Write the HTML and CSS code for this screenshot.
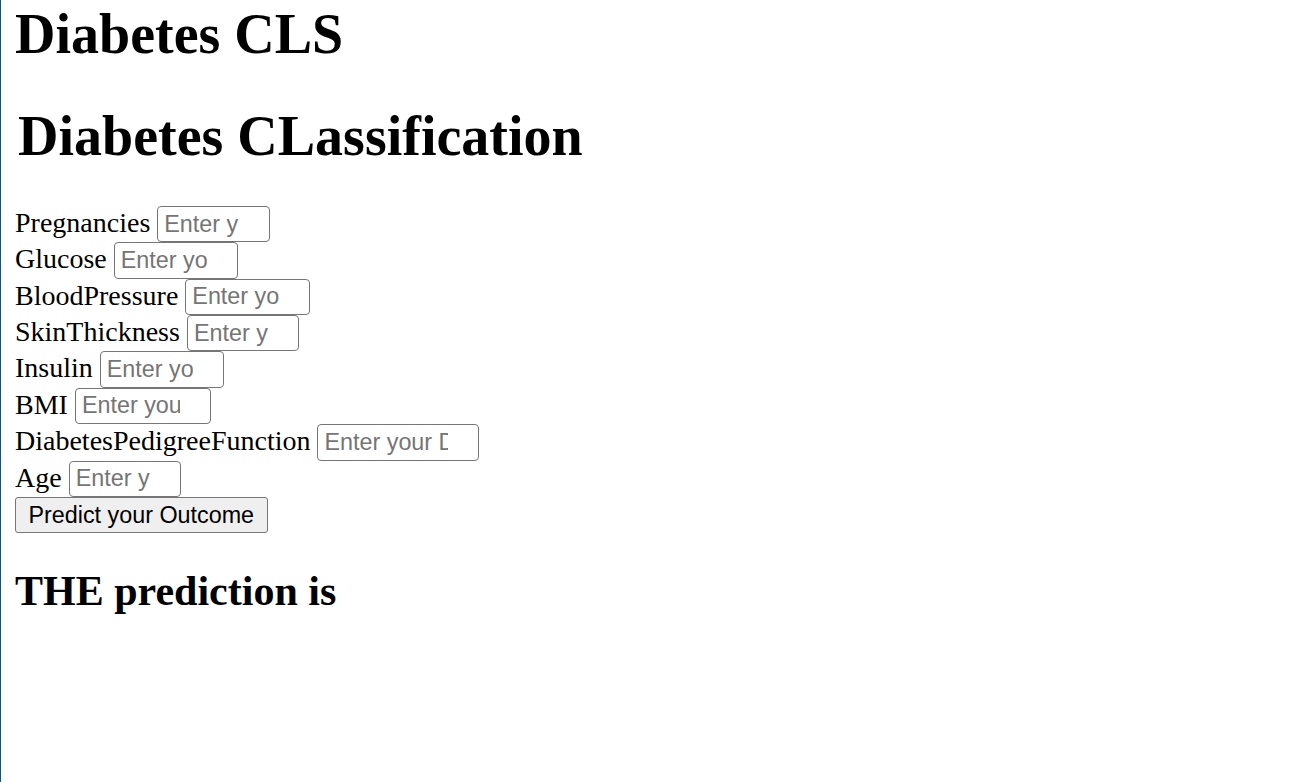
FILE: index.html
```html
<!DOCTYPE html>
<html lang="en">
<head>
<meta charset="utf-8">
<title>Diabetes CLS</title>
<link rel="stylesheet" href="styles.css">
</head>
<body>
<h1 class="page-title">Diabetes CLS</h1>
<h1 class="form-title">Diabetes CLassification</h1>
<form class="predict-form">
<label class="field-label" for="preg">Pregnancies</label> <input class="field-input w-preg" id="preg" type="text" placeholder="Enter your Pregnancies"><br>
<label class="field-label" for="glu">Glucose</label> <input class="field-input w-glu" id="glu" type="text" placeholder="Enter your Glucose"><br>
<label class="field-label" for="bp">BloodPressure</label> <input class="field-input w-bp" id="bp" type="text" placeholder="Enter your BloodPressure"><br>
<label class="field-label" for="skin">SkinThickness</label> <input class="field-input w-skin" id="skin" type="text" placeholder="Enter your SkinThickness"><br>
<label class="field-label" for="ins">Insulin</label> <input class="field-input w-ins" id="ins" type="text" placeholder="Enter your Insulin"><br>
<label class="field-label" for="bmi">BMI</label> <input class="field-input w-bmi" id="bmi" type="text" placeholder="Enter your BMI"><br>
<label class="field-label" for="dpf">DiabetesPedigreeFunction</label> <input class="field-input w-dpf" id="dpf" type="text" placeholder="Enter your DiabetesPedigreeFunction"><br>
<label class="field-label" for="age">Age</label> <input class="field-input w-age" id="age" type="text" placeholder="Enter your Age"><br>
<button class="predict-btn" type="button">Predict your Outcome</button>
</form>
<h2 class="result">THE prediction is</h2>
</body>
</html>
```

FILE: styles.css
```css
html {
  border-left: 1px solid #0b5488;
  min-height: 100%;
  box-sizing: border-box;
  background: #ffffff;
}

body {
  margin: 0 14px;
  font-family: "Liberation Serif", "Times New Roman", serif;
  font-size: 28px;
  line-height: 32.2px;
  color: #000000;
}

.page-title,
.form-title {
  font-size: 56px;
  line-height: 64.4px;
  font-weight: bold;
  margin: 37.5px 0;
}

.page-title {
  margin-top: 2px;
}

.form-title {
  padding-left: 3px;
}

.predict-form {
  margin: 0;
  line-height: 24px;
}

.field-label {
  font-family: "Liberation Serif", "Times New Roman", serif;
}

.field-input {
  box-sizing: border-box;
  height: 36.4px;
  margin: 0;
  padding: 4.2px 30px 4.2px 6px;
  border: 1px solid #767676;
  border-radius: 4px;
  background: #ffffff;
  font-family: "Liberation Sans", Arial, sans-serif;
  font-size: 23.33px;
  line-height: 26px;
  color: #000000;
  vertical-align: baseline;
}

.field-input::placeholder {
  color: #757575;
  opacity: 1;
}

.w-preg { width: 112.5px; }
.w-glu { width: 124.5px; }
.w-bp { width: 125px; }
.w-skin { width: 112px; }
.w-ins { width: 124.5px; }
.w-bmi { width: 136.5px; }
.w-dpf { width: 161.5px; }
.w-age { width: 112.5px; }

.predict-btn {
  box-sizing: border-box;
  height: 36.4px;
  margin: 0;
  padding: 4.2px 12.5px 4.2px;
  border: 1px solid #767676;
  border-radius: 3px;
  background: #efefef;
  font-family: "Liberation Sans", Arial, sans-serif;
  font-size: 23.33px;
  line-height: 26px;
  color: #000000;
  vertical-align: baseline;
}

.result {
  font-size: 42px;
  line-height: 48.3px;
  font-weight: bold;
  margin: 34px 0 34.9px;
}
```
